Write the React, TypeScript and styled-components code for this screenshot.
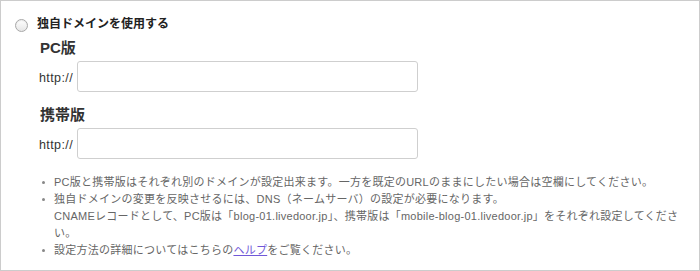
import React from "react";
import styled, { createGlobalStyle } from "styled-components";

const Global = createGlobalStyle`
  html, body { margin: 0; padding: 0; background: #fff; }
  body { font-family: "Liberation Sans", Arial, "Noto Sans CJK JP", sans-serif; }
  * { box-sizing: border-box; }
`;

const Frame = styled.div`
  width: 700px;
  height: 271px;
  border: 1px solid #cccccc;
  background: #fff;
  padding: 14px 4px 0 14px;
  overflow: hidden;
`;

const RadioRow = styled.label`
  display: flex;
  align-items: center;
  gap: 9px;
  height: 18px;
  cursor: pointer;
`;

const RadioDot = styled.span`
  width: 13px;
  height: 13px;
  border-radius: 50%;
  border: 1px solid #a8a8a8;
  background: linear-gradient(#ffffff, #e6e6e6);
  box-shadow: inset 0 1px 1px rgba(0, 0, 0, 0.08);
  flex: none;
  margin-top: 2px;
`;

const RadioText = styled.span`
  font-size: 12px;
  font-weight: bold;
  color: #222;
  line-height: 18px;
`;

const Section = styled.div`
  padding-left: 24px;
`;

const Heading = styled.h3<{ $top: number }>`
  margin: ${(p) => p.$top}px 0 0 0;
  padding-top: 1px;
  padding-left: 1px;
  font-size: 15px;
  font-weight: bold;
  color: #333;
  line-height: 20px;
  height: 21px;
`;

const UrlRow = styled.div`
  display: flex;
  align-items: center;
  gap: 4px;
  margin-top: 3px;
`;

const Scheme = styled.span`
  font-size: 12.5px;
  letter-spacing: 0.4px;
  color: #333;
  margin-top: 2px;
`;

const UrlInput = styled.input`
  width: 341px;
  height: 31px;
  border: 1px solid #cfcfcf;
  border-radius: 3px;
  padding: 4px 6px;
  font-size: 12px;
  background: #fff;
  outline: none;
`;

const Notes = styled.ul`
  margin: 15px 0 0 0;
  padding: 0 0 0 39px;
  list-style: none;
`;

const Note = styled.li`
  position: relative;
  font-size: 11px;
  letter-spacing: 0.25px;
  line-height: 17px;
  color: #666;
  &::before {
    content: "";
    position: absolute;
    left: -12px;
    top: 7px;
    width: 3px;
    height: 3px;
    border-radius: 50%;
    background: #888;
  }
`;

const HelpLink = styled.a`
  color: #7058d8;
  text-decoration: underline;
`;

export default function App() {
  return (
    <>
      <Global />
      <Frame>
        <RadioRow>
          <RadioDot />
          <RadioText>独自ドメインを使用する</RadioText>
        </RadioRow>
        <Section>
          <Heading $top={4}>PC版</Heading>
          <UrlRow>
            <Scheme>http://</Scheme>
            <UrlInput type="text" />
          </UrlRow>
          <Heading $top={12}>携帯版</Heading>
          <UrlRow>
            <Scheme>http://</Scheme>
            <UrlInput type="text" />
          </UrlRow>
        </Section>
        <Notes>
          <Note>
            PC版と携帯版はそれぞれ別のドメインが設定出来ます。一方を既定のURLのままにしたい場合は空欄にしてください。
          </Note>
          <Note>
            独自ドメインの変更を反映させるには、DNS（ネームサーバ）の設定が必要になります。
            <br />
            CNAMEレコードとして、PC版は「blog-01.livedoor.jp」、携帯版は「mobile-blog-01.livedoor.jp」をそれぞれ設定してください。
          </Note>
          <Note>
            設定方法の詳細についてはこちらの<HelpLink href="#">ヘルプ</HelpLink>をご覧ください。
          </Note>
        </Notes>
      </Frame>
    </>
  );
}
